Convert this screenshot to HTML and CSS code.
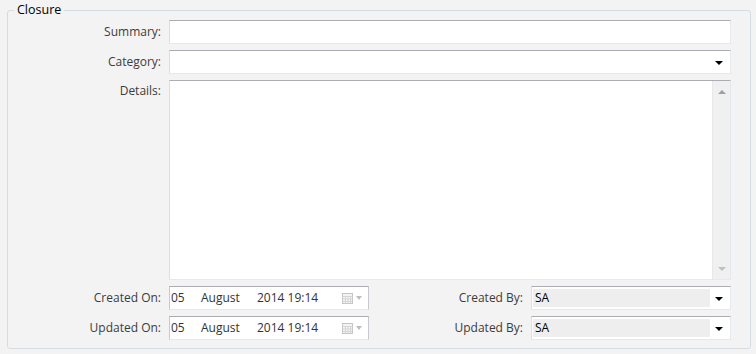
FILE: index.html
```html
<!DOCTYPE html>
<html lang="en">
<head>
  <meta charset="UTF-8">
  <title>Closure</title>
  <link rel="stylesheet" href="styles.css">
</head>
<body>
  <fieldset class="closure">
    <legend>Closure</legend>
    <div class="form-grid">
      <label class="lbl">Summary:</label>
      <div class="box wide"></div>

      <label class="lbl">Category:</label>
      <div class="box wide combo"><span class="arrow"></span></div>

      <label class="lbl top">Details:</label>
      <div class="box wide memo">
        <div class="scrollbar">
          <span class="sb-up"></span>
          <span class="sb-down"></span>
        </div>
      </div>

      <label class="lbl">Created On:</label>
      <div class="box date">
        <span class="d-day">05</span><span class="d-month">August</span><span class="d-year">2014 19:14</span>
        <span class="cal">
          <svg width="11" height="11" viewBox="0 0 11 11"><rect x="0.5" y="0.5" width="10" height="10" fill="#f4f4f4" stroke="#c4c4c4"/><path d="M0.5 3.5h10M0.5 6h10M0.5 8.5h10M3.5 3.5v7M6 3.5v7M8.5 3.5v7" stroke="#d6d6d6" fill="none"/></svg>
          <span class="cal-arrow"></span>
        </span>
      </div>
      <label class="lbl">Created By:</label>
      <div class="box combo ro"><span class="ro-value">SA</span><span class="arrow"></span></div>

      <label class="lbl">Updated On:</label>
      <div class="box date">
        <span class="d-day">05</span><span class="d-month">August</span><span class="d-year">2014 19:14</span>
        <span class="cal">
          <svg width="11" height="11" viewBox="0 0 11 11"><rect x="0.5" y="0.5" width="10" height="10" fill="#f4f4f4" stroke="#c4c4c4"/><path d="M0.5 3.5h10M0.5 6h10M0.5 8.5h10M3.5 3.5v7M6 3.5v7M8.5 3.5v7" stroke="#d6d6d6" fill="none"/></svg>
          <span class="cal-arrow"></span>
        </span>
      </div>
      <label class="lbl">Updated By:</label>
      <div class="box combo ro"><span class="ro-value">SA</span><span class="arrow"></span></div>
    </div>
  </fieldset>
</body>
</html>
```

FILE: styles.css
```css
body { margin: 0; background: #f3f3f3; font-family: "Open Sans", "Noto Sans", sans-serif; font-size: 12px; color: #3c3c3c; }
.closure { margin: 3px 5px 0 7px; padding: 3px 19px 8px 0; border: 1px solid #d5dde3; border-radius: 3px; width: 723px; box-sizing: content-box; }
.closure legend { margin-left: 6px; padding: 0 3px; color: #000; line-height: 14px; font-size: 12.5px; }
.form-grid { display: grid; grid-template-columns: 153px 200px 1fr 200px; grid-template-rows: 24px 24px 200px 24px 24px; column-gap: 8px; row-gap: 6px; }
.lbl { text-align: right; line-height: 24px; white-space: nowrap; }
.lbl.top { line-height: 21px; }
.box { position: relative; background: #fff; border: 1px solid; border-color: #abadb3 #e3e9ef #e3e9ef #dbdfe6; box-sizing: border-box; }
.wide { grid-column: 2 / -1; }
.arrow { position: absolute; right: 7px; top: 10px; width: 0; height: 0; border-left: 4px solid transparent; border-right: 4px solid transparent; border-top: 4px solid #000; }
.memo { overflow: hidden; }
.scrollbar { position: absolute; top: 0; right: 0; bottom: 0; width: 17px; background: #f0f0f0; border-left: 1px solid #e8e8e8; }
.sb-up, .sb-down { position: absolute; left: 5px; width: 0; height: 0; border-left: 4px solid transparent; border-right: 4px solid transparent; }
.sb-up { top: 9px; border-bottom: 4px solid #a0a0a0; }
.sb-down { bottom: 8px; border-top: 4px solid #c0c0c0; }
.date { display: flex; align-items: center; border-color: #abadb3 #c6cacf #e3e9ef #c6cacf; color: #333; line-height: 22px; padding-left: 1px; }
.d-day { width: 30px; }
.d-month { width: 56px; }
.d-year { flex: 1; }
.cal { display: flex; align-items: center; gap: 3px; margin-right: 6px; }
.cal svg { display: block; }
.cal-arrow { width: 0; height: 0; border-left: 3px solid transparent; border-right: 3px solid transparent; border-top: 4px solid #bdbdbd; }
.ro { padding: 2px 20px 2px 1px; }
.ro-value { display: block; height: 100%; background: #eeeeee; color: #000; line-height: 18px; padding-left: 2px; }
```
